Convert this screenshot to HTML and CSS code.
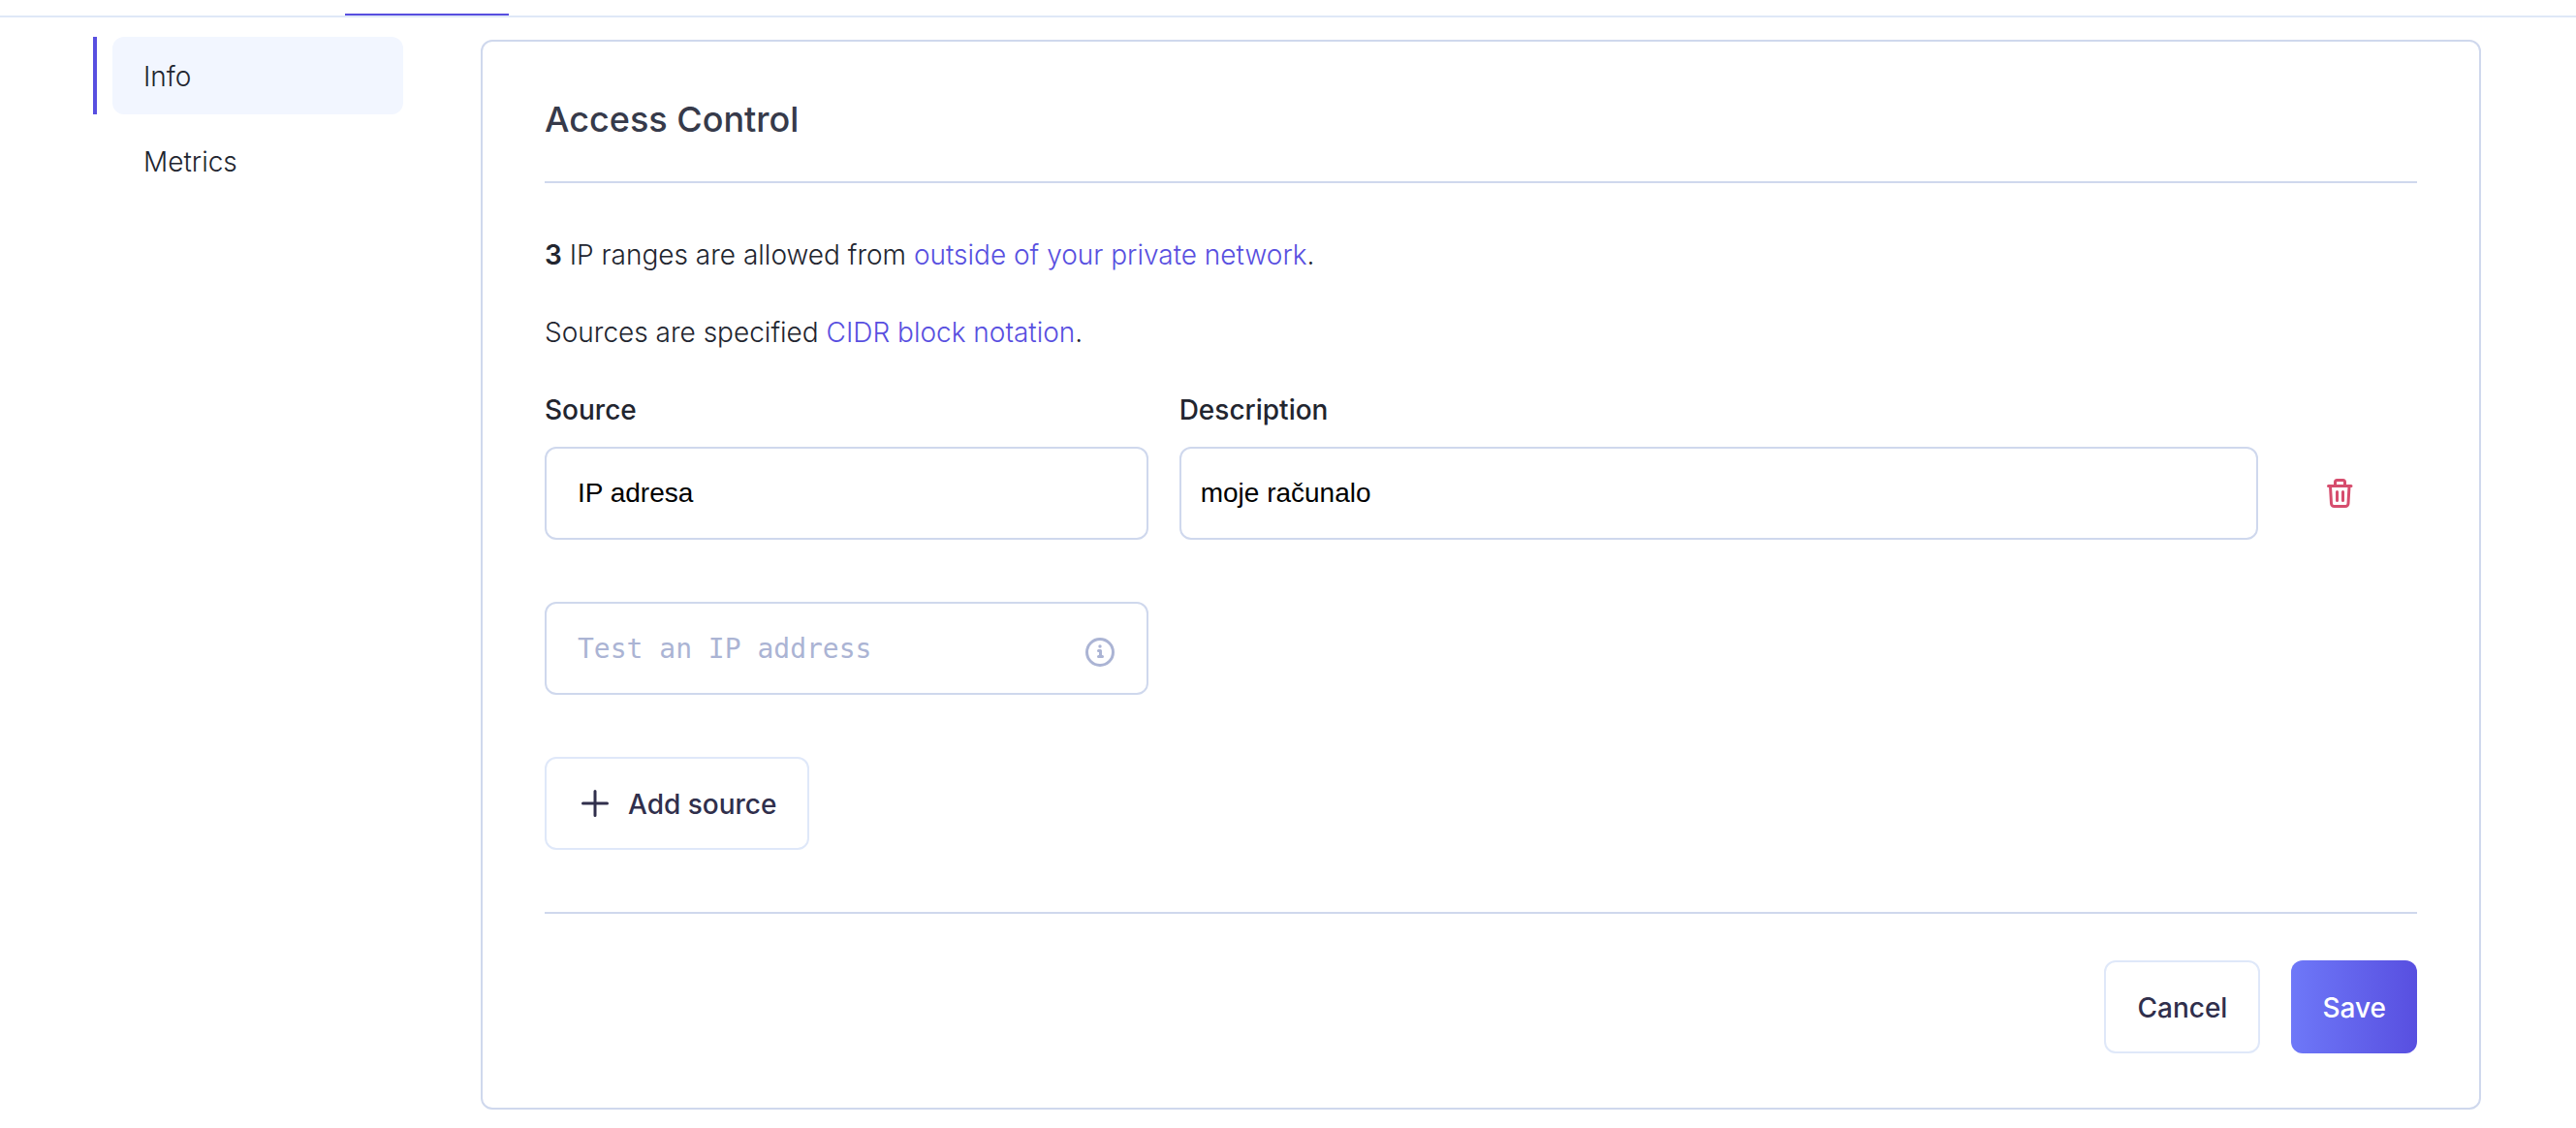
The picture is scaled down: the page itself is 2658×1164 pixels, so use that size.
FILE: index.html
```html
<!DOCTYPE html>
<html lang="en">
<head>
<meta charset="utf-8">
<meta name="viewport" content="width=device-width, initial-scale=1">
<title>Access Control</title>
<link rel="stylesheet" href="styles.css">
</head>
<body>
<div class="tabs"><span class="tab-active"></span></div>
<div class="layout">
  <nav class="sidebar" aria-label="Sections">
    <a class="nav-link nav-link-active" href="#info" aria-current="page">Info</a>
    <a class="nav-link" href="#metrics">Metrics</a>
  </nav>
  <main class="card">
    <h1 class="card-title">Access Control</h1>
    <form class="card-form">
      <p class="text"><strong class="count">3</strong> IP ranges are allowed from <a class="link" href="#network">outside of your private network</a>.</p>
      <p class="text">Sources are specified <a class="link" href="#cidr">CIDR block notation</a>.</p>
      <div class="grid">
        <div class="field col-source">
          <label class="label" for="source">Source</label>
          <input class="input" id="source" type="text" value="IP adresa">
        </div>
        <div class="field col-description">
          <label class="label" for="description">Description</label>
          <input class="input input-tight" id="description" type="text" value="moje računalo">
        </div>
        <button class="delete" type="button" aria-label="Remove source">
          <svg class="icon-trash" viewBox="0 0 40 40" aria-hidden="true">
            <path d="M8.500 12.500H32M15.500 12V8.500a2 2 0 0 1 2-2h6a2 2 0 0 1 2 2V12M10.500 13l1 17.500a3 3 0 0 0 3 3h11.500a3 3 0 0 0 3-3l1-17.500M17.500 18.500v9M23.500 18.500v9"/>
          </svg>
        </button>
      </div>
      <div class="grid">
        <div class="test col-source">
          <input class="input input-mono" type="text" placeholder="Test an IP address" aria-label="Test an IP address">
          <svg class="icon-info" viewBox="0 0 32 32" aria-hidden="true">
            <circle cx="16" cy="16" r="13.500"/>
            <path class="stem" d="M14.500 14.500h2v6M14.500 20.500h4"/>
            <circle class="dot" cx="16" cy="10" r="1.700"/>
          </svg>
        </div>
      </div>
      <button class="button button-add" type="button">
        <svg class="icon-plus" viewBox="0 0 28 28" aria-hidden="true"><path d="M14 1.500v25M1.500 14h25"/></svg>
        Add source
      </button>
      <div class="actions">
        <button class="button" type="button">Cancel</button>
        <button class="button button-primary" type="submit">Save</button>
      </div>
    </form>
  </main>
</div>
</body>
</html>
```

FILE: styles.css
```css
*, *::before, *::after { box-sizing: border-box; }

body {
  margin: 0;
  background: #fff;
  color: #22252f;
  font: 350 28px/40px Inter, "Liberation Sans", sans-serif;
}

.tabs {
  display: flex;
  height: 18px;
  padding-left: 356px;
  border-bottom: 2px solid #dfe8f7;
  align-items: flex-end;
}
.tab-active { width: 169px; height: 2px; background: #584fe0; }

.layout {
  display: grid;
  grid-template-columns: 320px minmax(0, 1fr);
  column-gap: 80px;
  align-items: start;
  padding: 20px 98px 16px 96px;
}

.sidebar { display: flex; flex-direction: column; gap: 8px; }
.nav-link {
  height: 80px;
  margin-left: 20px;
  padding: 21px 32px 19px;
  border-radius: 12px;
  color: inherit;
  text-decoration: none;
}
.nav-link-active { position: relative; background: #f2f6ff; }
.nav-link-active::before {
  content: "";
  position: absolute;
  left: -20px;
  top: 0;
  bottom: 0;
  width: 4px;
  background: #584fe0;
}

.card {
  margin-top: 3px;
  padding: 56px 64px;
  border: 2px solid #cfd8ed;
  border-radius: 12px;
}
.card-title {
  margin: 0;
  padding-bottom: 40px;
  border-bottom: 2px solid #cfd8ed;
  color: #363a4a;
  font-size: 36px;
  font-weight: 500;
  line-height: 48px;
}
.card-form { display: flex; flex-direction: column; }
.text { margin: 0; padding-top: 40px; }
.card-title + .card-form { padding-top: 14px; }
.count { font-weight: 600; }
.link { color: #584fe0; text-decoration: none; }

.grid {
  display: grid;
  grid-template-columns: repeat(12, minmax(0, 1fr));
  column-gap: 32px;
  align-items: end;
  padding-bottom: 64px;
}
.col-source { grid-column: span 4; }
.col-description { grid-column: span 7; }
.field { display: flex; flex-direction: column; gap: 18px; padding-top: 40px; }
.label { font-weight: 500; }

.input {
  width: 100%;
  height: 96px;
  padding: 0 32px;
  border: 2px solid #cfd8ed;
  border-radius: 12px;
  background: #fff;
  color: #000;
  font: 28px/40px "Liberation Sans", sans-serif;
}
.input-tight { padding: 0 20px; }
.input-mono { font-family: "DejaVu Sans Mono", monospace; }
.input-mono::placeholder { color: #abb4d4; opacity: 1; }

.test { position: relative; }
.icon-info {
  position: absolute;
  right: 34px;
  top: 36px;
  width: 32px;
  height: 32px;
  fill: none;
  stroke: #abb4d4;
  stroke-width: 3;
}
.icon-info .stem { stroke-linecap: round; stroke-linejoin: round; }
.icon-info .dot { fill: #abb4d4; stroke: none; }

.delete {
  height: 96px;
  padding: 0 32px;
  border: 0;
  background: none;
  text-align: left;
}
.icon-trash {
  display: block;
  width: 40px;
  height: 40px;
  fill: none;
  stroke: #d64d6e;
  stroke-width: 3;
  stroke-linecap: round;
  stroke-linejoin: round;
}

.button {
  display: flex;
  align-items: center;
  height: 96px;
  padding: 2px 32px 0;
  border: 2px solid #dfe8f9;
  border-radius: 12px;
  background: #fff;
  color: #302f4c;
  font: 500 28px/40px Inter, "Liberation Sans", sans-serif;
}
.button-add { align-self: flex-start; gap: 20px; padding-left: 36px; }
.icon-plus {
  width: 28px;
  height: 28px;
  margin-bottom: 2px;
  fill: none;
  stroke: #302f4c;
  stroke-width: 3;
  stroke-linecap: round;
}
.button-primary {
  border: 0;
  background: linear-gradient(90deg, #6e78f8, #584fe0);
  color: #fff;
}
.actions {
  display: flex;
  justify-content: flex-end;
  gap: 32px;
  margin-top: 64px;
  padding-top: 48px;
  border-top: 2px solid #cfd8ed;
}
```
